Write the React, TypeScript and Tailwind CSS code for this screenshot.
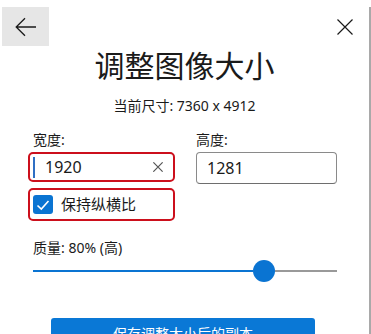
const font = "font-['Noto_Sans','Noto_Sans_CJK_SC',sans-serif]"

function BackArrow() {
  return (
    <svg width="22" height="20" viewBox="0 0 22 20" fill="none" stroke="#1a1a1a" strokeWidth="1.3" aria-hidden>
      <path d="M21 10H1.5M10 1.2L1.2 10l8.8 8.8" />
    </svg>
  )
}

function Cross({ size, stroke }: { size: number; stroke: string }) {
  return (
    <svg width={size} height={size} viewBox="0 0 16 16" fill="none" stroke={stroke} strokeWidth={16 * 1.2 / size} aria-hidden>
      <path d="M0.5 0.5l15 15M15.5 0.5l-15 15" />
    </svg>
  )
}

function CheckMark() {
  return (
    <svg width="14" height="12" viewBox="0 0 14 12" fill="none" stroke="white" strokeWidth="1.6" aria-hidden>
      <path d="M1.5 6.5l3.8 3.6L12.5 2" />
    </svg>
  )
}

export default function App() {
  return (
    <div className={`w-[371px] h-[334px] overflow-hidden bg-white text-[#1a1a1a] ${font}`}>
      <div className="mt-[7px] h-[400px] border-r-2 border-[#a9a9a9] flex flex-col">
        {/* header */}
        <div className="h-[39px] flex items-center justify-between pl-[2px] pr-[16px]">
          <button className="w-[47px] h-[39px] bg-[#e6e6e6] flex items-center justify-center">
            <BackArrow />
          </button>
          <Cross size={16} stroke="#1a1a1a" />
        </div>

        <h1 className="mt-[2px] text-center text-[30px] leading-[36px] font-normal">调整图像大小</h1>
        <p className="mt-[12px] text-center text-[14px] leading-[20px]">当前尺寸: 7360 x 4912</p>

        <div className="mt-[14px] pl-[28px] pr-[32px] flex gap-[21px]">
          <div className="w-[147px] flex flex-col">
            <span className="pl-[5px] text-[14px] leading-[20px]">宽度:</span>
            <div className="mt-[2px] h-[30px] rounded-[5px] border-2 border-[#cc0f1c] flex items-center pl-[3px] pr-[10px]">
              <span className="w-[2px] h-[21px] bg-[#2f6fc4]" />
              <span className="ml-[10px] flex-1 text-[16px]">1920</span>
              <Cross size={10} stroke="#555" />
            </div>
            <div className="mt-[6px] h-[33px] rounded-[5px] border-2 border-[#cc0f1c] flex items-center pl-[3px]">
              <span className="w-[20px] h-[19px] rounded-[3px] bg-[#0a74d2] flex items-center justify-center">
                <CheckMark />
              </span>
              <span className="ml-[8px] text-[15px]">保持纵横比</span>
            </div>
          </div>
          <div className="flex-1 flex flex-col">
            <span className="text-[14px] leading-[20px]">高度:</span>
            <div className="mt-[2px] h-[32px] rounded-[4px] border border-[#8a8a8a] border-b-[#6e6e6e] flex items-center pl-[10px]">
              <span className="text-[16px]">1281</span>
            </div>
          </div>
        </div>

        <p className="mt-[17px] pl-[33px] text-[14px] leading-[20px]">质量: 80% (高)</p>

        <div className="mt-[2px] ml-[33px] mr-[32px] h-[22px] flex items-center">
          <span className="w-[220px] h-[2px] bg-[#0a74d2]" />
          <span className="w-[22px] h-[22px] rounded-full bg-[#0a74d2]" />
          <span className="flex-1 h-[2px] bg-[#999]" />
        </div>

        <div className="mt-[36px] flex justify-center pr-[3px]">
          <button className="w-[264px] h-[32px] rounded-[3px] bg-[#0a78d6] text-white text-[14px] leading-[20px]">
            保存调整大小后的副本
          </button>
        </div>
      </div>
    </div>
  )
}
